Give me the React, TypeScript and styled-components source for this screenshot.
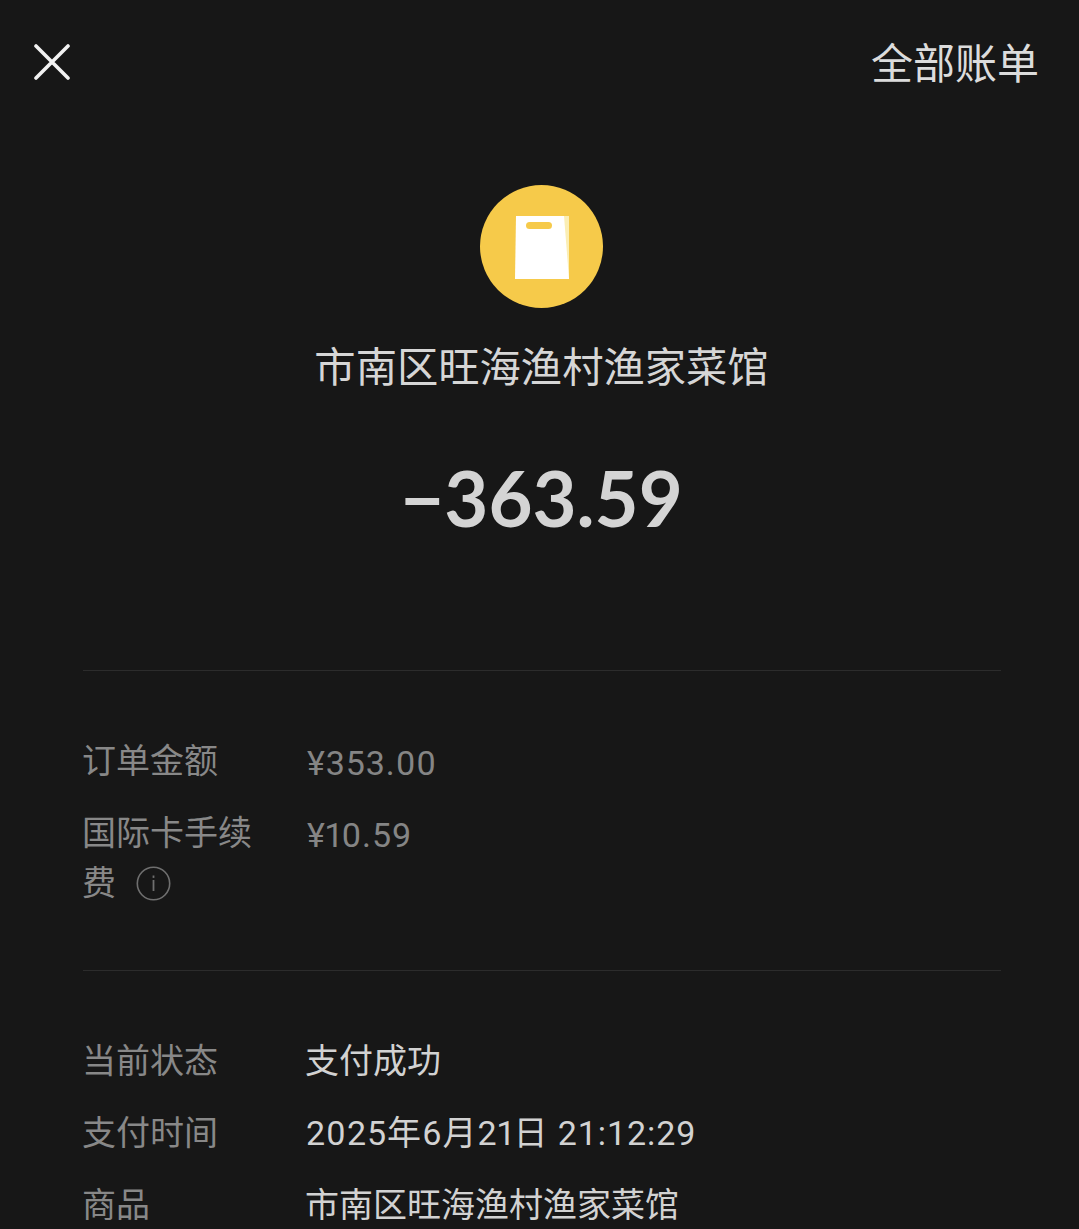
import React from "react";
import styled, { createGlobalStyle } from "styled-components";

const GlobalStyle = createGlobalStyle`
  html, body {
    margin: 0;
    padding: 0;
    background: #171717;
    overflow: hidden;
  }
`;

const Page = styled.div`
  width: 1079px;
  height: 1229px;
  overflow: hidden;
  background: #171717;
  font-family: "Roboto", "Noto Sans CJK SC", sans-serif;
`;

const TopBar = styled.div`
  display: flex;
  justify-content: space-between;
  align-items: flex-start;
  padding: 0 40px 0 34px;
`;

const CloseBtn = styled.div`
  display: flex;
  width: 36px;
  height: 36px;
  margin-top: 44px;
`;

const AllBills = styled.div`
  margin-top: 34px;
  font-size: 42px;
  line-height: 62px;
  color: #dcdcdc;
`;

const Summary = styled.div`
  display: flex;
  flex-direction: column;
  align-items: center;
  padding: 89px 0 0 4px;
`;

const ShopIcon = styled.div`
  display: flex;
  align-items: center;
  justify-content: center;
  box-sizing: border-box;
  width: 123px;
  height: 123px;
  padding-top: 2px;
  border-radius: 50%;
  background: #f6ca4a;
`;

const ShopName = styled.div`
  margin-top: 31px;
  font-size: 41.3px;
  line-height: 58px;
  color: #d6d6d6;
`;

const Amount = styled.div`
  margin-top: 51px;
  font-family: "Lato", sans-serif;
  font-size: 76px;
  font-weight: 700;
  line-height: 100px;
  color: #d4d4d4;
`;

const Section = styled.div<{ $top: number; $bottom: number }>`
  margin: ${(p) => p.$top}px 78px 0 83px;
  border-top: 1px solid #2c2c2c;
  padding: 65px 0 ${(p) => p.$bottom}px;
`;

const Row = styled.div`
  display: grid;
  grid-template-columns: 223px 1fr;
  margin-bottom: 22px;
`;

const Label = styled.div`
  max-width: 176px;
  margin-left: -1px;
  font-size: 34px;
  line-height: 50px;
  color: #888888;
`;

const Value = styled.div`
  margin-left: -1px;
  font-size: 34px;
  line-height: 50px;
  color: #d2d2d2;
`;

const Money = styled.div`
  margin-bottom: -2px;
  padding: 2px 0 0 1px;
  font-size: 34px;
  line-height: 50px;
  font-variant-numeric: proportional-nums;
  letter-spacing: 0.9px;
  color: #858585;
`;

const Timestamp = styled(Value)`
  margin-left: 0;
  font-variant-numeric: proportional-nums;
  letter-spacing: 1px;
`;

const Clock = styled.span`
  font-variant-numeric: tabular-nums;
  letter-spacing: 0.9px;
`;

const Info = styled.span`
  display: inline-flex;
  vertical-align: -6px;
  margin-left: 20px;
`;

const XIcon = () => (
  <svg width="36" height="36" viewBox="0 0 36 36" fill="none">
    <path
      d="M2 2 L34 34 M34 2 L2 34"
      stroke="#f2f2f2"
      strokeWidth="3.6"
      strokeLinecap="round"
    />
  </svg>
);

const BagIcon = () => (
  <svg width="56" height="64" viewBox="0 0 56 64">
    <path d="M38 0 H55 V63 H42 Z" fill="#fbeeb4" />
    <path d="M2 0 H50 L55 63 H1 Z" fill="#ffffff" />
    <rect x="12" y="6" width="26" height="7" rx="3.5" fill="#f6ca4a" />
  </svg>
);

const InfoIcon = () => (
  <svg width="35" height="35" viewBox="0 0 35 35" fill="none">
    <circle cx="17.5" cy="17.5" r="16.2" stroke="#6f6f6f" strokeWidth="1.6" />
    <rect x="16.6" y="9.5" width="1.8" height="2.4" fill="#6f6f6f" />
    <rect x="16.6" y="14" width="1.8" height="11" fill="#6f6f6f" />
  </svg>
);

export default function App() {
  return (
    <Page>
      <GlobalStyle />
      <TopBar>
        <CloseBtn>
          <XIcon />
        </CloseBtn>
        <AllBills>全部账单</AllBills>
      </TopBar>
      <Summary>
        <ShopIcon>
          <BagIcon />
        </ShopIcon>
        <ShopName>市南区旺海渔村渔家菜馆</ShopName>
        <Amount>−363.59</Amount>
      </Summary>
      <Section $top={122} $bottom={40}>
        <Row>
          <Label>订单金额</Label>
          <Money>¥353.00</Money>
        </Row>
        <Row>
          <Label>
            国际卡手续费
            <Info>
              <InfoIcon />
            </Info>
          </Label>
          <Money>¥10.59</Money>
        </Row>
      </Section>
      <Section $top={0} $bottom={0}>
        <Row>
          <Label>当前状态</Label>
          <Value>支付成功</Value>
        </Row>
        <Row>
          <Label>支付时间</Label>
          <Timestamp>
            2025年6月21日 <Clock>21:12:29</Clock>
          </Timestamp>
        </Row>
        <Row>
          <Label>商品</Label>
          <Value>市南区旺海渔村渔家菜馆</Value>
        </Row>
      </Section>
    </Page>
  );
}
